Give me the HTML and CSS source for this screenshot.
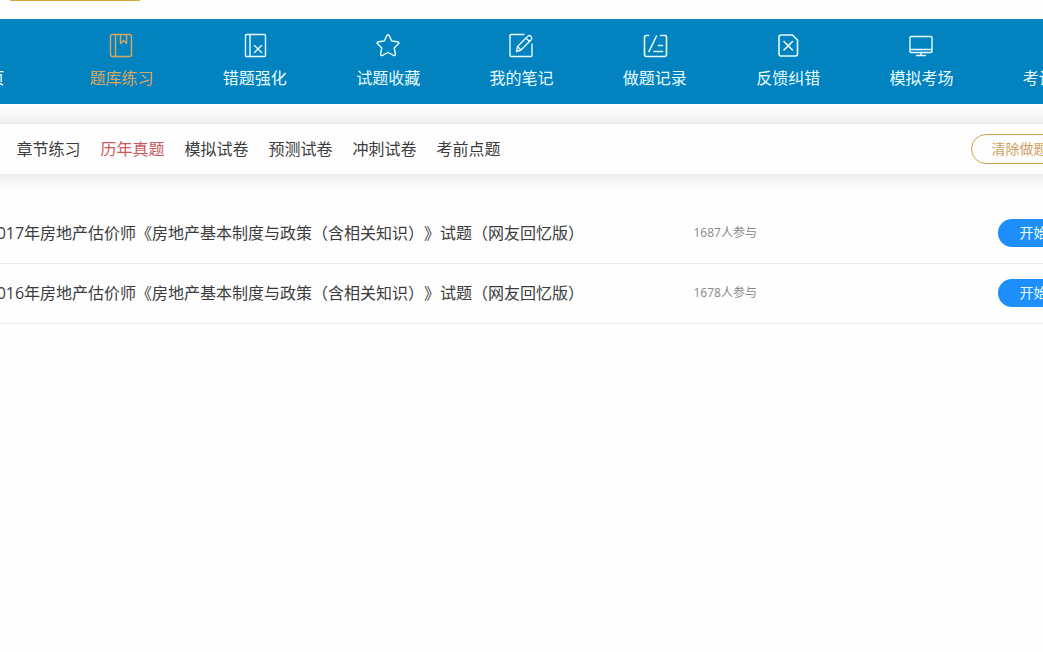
FILE: index.html
```
<!DOCTYPE html>
<html lang="zh-CN">
<head>
<meta charset="utf-8">
<title>题库练习</title>
<link rel="stylesheet" href="styles.css">
</head>
<body>
<header class="top"><div class="top-tab"></div></header>
<nav class="main-nav">
  <div class="wrap main-list">
    <a class="main-item" href="#"><svg class="icon" viewBox="0 0 26 26"></svg><span>首页</span></a>
    <a class="main-item active" href="#"><svg class="icon" viewBox="0 0 26 26"><rect x="2.5" y="2.5" width="21" height="22" rx="2"/><path d="M7.500 2.500v22M12.500 2.500v9l3-3 3 3v-9"/></svg><span>题库练习</span></a>
    <a class="main-item" href="#"><svg class="icon" viewBox="0 0 26 26"><rect x="3.500" y="2.500" width="20" height="22" rx="1"/><path d="M8 2.500v22M12.500 13.500l7 7M19.500 13.500l-7 7"/></svg><span>错题强化</span></a>
    <a class="main-item" href="#"><svg class="icon" viewBox="0 0 26 26"><path d="M11.800 3.600Q13 1.800 14.200 3.600L16.700 9l5.800.7q2.300.4.900 2.100L19.200 16l1.200 6q.1 2.100-1.800 1.400L13 20.500l-5.600 2.900q-1.900.7-1.800-1.400l1.200-6-4.200-4.200q-1.400-1.700.9-2.100L9.300 9z"/></svg><span>试题收藏</span></a>
    <a class="main-item" href="#"><svg class="icon" viewBox="0 0 26 26"><path d="M16 2.500H3q-1 0-1 1v20q0 1 1 1h20q1 0 1-1V12M8.500 19.500l1-5L20 4q1.500-1 3 .4t.4 3L13 18zM18 6l3.500 3.500M9.500 14.500L13 18"/></svg><span>我的笔记</span></a>
    <a class="main-item" href="#"><svg class="icon bold" viewBox="0 0 26 26"><path d="M6.500 3.500H4q-1.500 0-1.500 1.500v17.500q0 2 2 2h18q2 0 2-2V5q0-1.500-1.500-1.500h-4.500M14.500 4L7 19.500M16.500 13.500h4M12 19.500h8.500"/></svg><span>做题记录</span></a>
    <a class="main-item" href="#"><svg class="icon bold" viewBox="0 0 26 26"><path d="M6 3h11.500l5 5v14q0 2-2 2H6q-2 0-2-2V5q0-2 2-2zM9 9.500l8.500 8.500M17.500 9.500L9 18"/></svg><span>反馈纠错</span></a>
    <a class="main-item" href="#"><svg class="icon" viewBox="0 0 26 26"><rect x="2" y="4.500" width="22" height="16" rx="1"/><path d="M2 17.500h22M13 20.500v3M8.500 23.500h9"/></svg><span>模拟考场</span></a>
    <a class="main-item" href="#"><svg class="icon" viewBox="0 0 26 26"></svg><span>考试资讯</span></a>
  </div>
</nav>
<nav class="sub-nav">
  <div class="wrap sub-row">
    <div class="sub-list">
      <a href="#">章节练习</a>
      <a class="current" href="#">历年真题</a>
      <a href="#">模拟试卷</a>
      <a href="#">预测试卷</a>
      <a href="#">冲刺试卷</a>
      <a href="#">考前点题</a>
    </div>
    <button class="clear" type="button">清除做题记录</button>
  </div>
</nav>
<main class="papers">
  <div class="paper">
    <div class="wrap paper-row">
      <span class="title">2017年房地产估价师《房地产基本制度与政策（含相关知识）》试题（网友回忆版）</span>
      <span class="count">1687人参与</span>
      <button class="start" type="button">开始做题</button>
    </div>
  </div>
  <div class="paper">
    <div class="wrap paper-row">
      <span class="title">2016年房地产估价师《房地产基本制度与政策（含相关知识）》试题（网友回忆版）</span>
      <span class="count">1678人参与</span>
      <button class="start" type="button">开始做题</button>
    </div>
  </div>
</main>
</body>
</html>
```

FILE: styles.css
```
* { box-sizing: border-box; }
body {
  margin: 0;
  overflow-x: hidden;
  background: #fdfefd;
  color: #3c3c3c;
  font: 16px/24px "Open Sans", "Noto Sans CJK SC", sans-serif;
  text-spacing-trim: space-all;
}
a { color: inherit; text-decoration: none; }
button { font: inherit; font-size: 14px; line-height: 20px; cursor: pointer; }

.top { height: 19px; padding-left: 10px; }
.top-tab {
  width: 130px;
  height: 1px;
  border-radius: 0 0 8px 8px;
  background: #d6a83c;
}

/* Fixed-width column kept centred on narrow windows too */
.wrap {
  display: flex;
  flex: none;
  width: 1200px;
}
.main-nav, .sub-nav, .paper {
  display: flex;
  justify-content: center;
  overflow: hidden;
}

.main-nav { background: #0283c0; color: #e8fcff; }
.main-item {
  display: flex;
  flex: 1;
  flex-direction: column;
  align-items: center;
  gap: 8px;
  padding: 13px 0 14px;
}
.main-item.active { color: #d9a860; }
.icon {
  width: 26px;
  height: 26px;
  fill: none;
  stroke: currentColor;
  stroke-width: 1.4;
  stroke-linecap: round;
  stroke-linejoin: round;
}
.icon.bold { stroke-width: 1.6; }

/* Runs past both window edges so the shadow stays even */
.sub-nav {
  margin: 20px -30px 0;
  background: #fefefe;
  box-shadow: 0 0 20px rgba(0, 0, 0, 0.15);
}
.sub-row {
  align-items: center;
  justify-content: space-between;
  padding: 10px 25px 10px 95px;
}
.sub-list { display: flex; gap: 20px; }
.current { color: #cc5a5a; }
.clear {
  height: 30px;
  padding: 0 20px;
  border: 1px solid #d0a050;
  border-radius: 15px;
  background: transparent;
  color: #d0a060;
}

.papers { padding-top: 30px; }
.paper { border-bottom: 1px solid #ececec; }
.paper-row {
  align-items: center;
  padding: 15px 24px 16px 66px;
}
.title { width: 706px; }
.count { color: #888; font-size: 12px; }
.start {
  height: 28px;
  margin-left: auto;
  padding: 0 22px;
  border: 0;
  border-radius: 14px;
  background: #1e8ffa;
  color: #e8fcff;
}
```
